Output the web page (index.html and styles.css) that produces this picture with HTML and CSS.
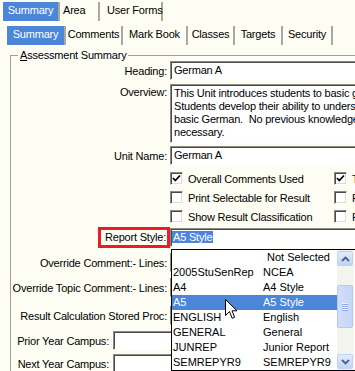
FILE: index.html
```html
<!DOCTYPE html>
<html>
<head>
<meta charset="utf-8">
<title>Assessment Summary</title>
<link rel="stylesheet" href="styles.css">
</head>
<body>
<div class="tabs top">
  <div class="tab sel t-sum">Summary</div>
  <div class="tab t-area">Area</div>
  <div class="tab t-uf">User Forms</div>
</div>
<div class="tabs sub">
  <div class="tab sel s-sum">Summary</div>
  <div class="tab s-com">Comments</div>
  <div class="tab s-mb">Mark Book</div>
  <div class="tab s-cl">Classes</div>
  <div class="tab s-tg">Targets</div>
  <div class="tab s-sec">Security</div>
</div>
<fieldset class="group">
  <legend><u>A</u>ssessment Summary</legend>
  <div class="row r-heading">
    <div class="lbl">Heading:</div>
    <div class="field wide">German A</div>
  </div>
  <div class="row r-overview">
    <div class="lbl top">Overview:</div>
    <div class="field wide area">This Unit introduces students to basic german.<br>Students develop their ability to understand and use<br>basic German.&nbsp; No previous knowledge of German is<br>necessary.</div>
  </div>
  <div class="row r-unit">
    <div class="lbl">Unit Name:</div>
    <div class="field wide">German A</div>
  </div>
  <div class="checks c-first">
    <div class="chk"><span class="cb on"><svg viewBox="0 0 11 11" width="11" height="11"><polyline points="2,5 4.3,7.5 9,2.5" fill="none" stroke="#000" stroke-width="1.8"/></svg></span><span class="ct">Overall Comments Used</span></div>
    <div class="chk"><span class="cb on"><svg viewBox="0 0 11 11" width="11" height="11"><polyline points="2,5 4.3,7.5 9,2.5" fill="none" stroke="#000" stroke-width="1.8"/></svg></span><span class="ct">Topic Comments Used</span></div>
  </div>
  <div class="checks">
    <div class="chk"><span class="cb"></span><span class="ct">Print Selectable for Result</span></div>
    <div class="chk"><span class="cb"></span><span class="ct">Print Result Description</span></div>
  </div>
  <div class="checks">
    <div class="chk"><span class="cb"></span><span class="ct">Show Result Classification</span></div>
    <div class="chk"><span class="cb"></span><span class="ct">Print Classification</span></div>
  </div>
  <div class="row r-report">
    <div class="lbl boxed"><span class="redbox">Report Style:</span></div>
    <div class="field wide combo"><span class="selected">A5 Style</span></div>
  </div>
  <div class="row r-oc">
    <div class="lbl">Override Comment:- Lines:</div>
    <div class="field small"></div>
  </div>
  <div class="row r-ot">
    <div class="lbl">Override Topic Comment:- Lines:</div>
    <div class="field small"></div>
  </div>
  <div class="row r-rc">
    <div class="lbl">Result Calculation Stored Proc:</div>
    <div class="field wide"></div>
  </div>
  <div class="row r-py">
    <div class="lbl short">Prior Year Campus:</div>
    <div class="field campus"></div>
  </div>
  <div class="row r-ny">
    <div class="lbl short">Next Year Campus:</div>
    <div class="field campus"></div>
  </div>
</fieldset>

<div class="dropdown">
  <div class="list">
    <div class="opt"><span></span><span class="ns">Not Selected</span></div>
    <div class="opt"><span>2005StuSenRep</span><span>NCEA</span></div>
    <div class="opt"><span>A4</span><span>A4 Style</span></div>
    <div class="opt sel"><span>A5</span><span>A5 Style</span></div>
    <div class="opt"><span>ENGLISH</span><span>English</span></div>
    <div class="opt"><span>GENERAL</span><span>General</span></div>
    <div class="opt"><span>JUNREP</span><span>Junior Report</span></div>
    <div class="opt"><span>SEMREPYR9</span><span>SEMREPYR9</span></div>
  </div>
  <div class="scroll">
    <div class="sbtn"><svg viewBox="0 0 9 6" width="9" height="6"><polyline points="1,5 4.5,1.5 8,5" fill="none" stroke="#4d6185" stroke-width="1.8"/></svg></div>
    <div class="thumb"><span></span><span></span><span></span><span></span></div>
    <div class="sbtn"><svg viewBox="0 0 9 6" width="9" height="6"><polyline points="1,1 4.5,4.5 8,1" fill="none" stroke="#4d6185" stroke-width="1.8"/></svg></div>
  </div>
</div>

<svg class="cursor" viewBox="0 0 13 21" width="13" height="21"><path d="M0.5 0.5 L0.5 16.5 L4.5 12.6 L7.2 19.3 L9.6 18.3 L7 11.8 L12 11.8 Z" fill="#fff" stroke="#000" stroke-width="1" stroke-linejoin="miter"/></svg>
</body>
</html>
```
FILE: styles.css
```css
html { overflow: hidden; }
body {
  margin: 0;
  width: 355px;
  height: 371px;
  overflow: hidden;
  position: relative;
  background: #fdfdf3;
  color: #000;
  font-family: "Liberation Sans", Arial, sans-serif;
  font-size: 11px;
  letter-spacing: -0.2px;
}

/* tabs */
.tabs { display: flex; height: 24px; box-sizing: border-box; padding-top: 2px; }
.tabs.top { padding-left: 3px; }
.tabs.sub { padding-left: 7px; }
.tab {
  height: 19px;
  line-height: 17px;
  box-sizing: border-box;
  border-right: 2px solid #a9a9a1;
  white-space: nowrap;
  text-align: center;
  flex: none;
}
.tab.sel { background: #4b86d9; color: #fff; }
.t-sum { width: 57px; }
.t-area { width: 40px; text-align: left; padding-left: 3px; }
.t-uf { width: 63px; text-align: left; padding-left: 7px; }
.s-sum { width: 59px; }
.s-com { width: 57px; }
.s-mb { width: 65px; }
.s-cl { width: 47px; }
.s-tg { width: 48px; }
.s-sec { width: 50px; }

/* group box */
.group {
  margin: 1px 0 0 10px;
  padding: 0;
  border: 0;
  border-top: 1px solid #a0a09a;
  border-left: 1px solid #a0a09a;
  box-shadow: inset 1px 1px 0 #fff;
  min-width: 0;
  height: 330px;
}
.group legend {
  padding: 0 2px;
  margin-left: 7px;
  line-height: 12px;
}

.row { display: flex; align-items: center; height: 19px; }
.lbl { width: 156px; flex: none; text-align: right; white-space: nowrap; }
.lbl.top { align-self: flex-start; padding-top: 2px; }
.lbl.short { width: 98px; }
.lbl.boxed { width: 159px; display: flex; justify-content: flex-end; }
.redbox {
  display: block;
  height: 21px;
  box-sizing: border-box;
  border: 3px solid #ec1c24;
  padding: 0 1px 0 4px;
  line-height: 15px;
}

.field {
  margin-left: 3px;
  height: 19px;
  box-sizing: border-box;
  background: #fff;
  border: 1px solid;
  border-color: #8a8a86 #fff #fff #8a8a86;
  box-shadow: inset 1px 1px 0 #4a4a4a;
  padding: 0 2px 0 3px;
  line-height: 17px;
  white-space: nowrap;
  overflow: hidden;
  flex: none;
}
.field.wide { width: 220px; }
.field.small { width: 30px; }
.field.campus { margin-left: 4px; width: 260px; }
.field.area { height: 59px; line-height: 13px; padding-top: 2px; }
.field.combo { margin-left: 0; padding-left: 1px; }
.selected { background: #4b86d9; color: #fff; padding: 0 1px; }

.r-overview { height: 59px; margin-top: 4px; align-items: flex-start; }
.r-unit { margin-top: 3px; }
.r-report { margin-top: 2px; }
.r-oc { margin-top: 6px; }
.r-ot { margin-top: 6px; }
.r-rc { margin-top: 9px; }
.r-py { margin-top: 6px; }
.r-ny { margin-top: 4px; }

/* checkboxes */
.checks { display: flex; height: 19px; align-items: center; padding-left: 159px; }
.c-first { margin-top: 4px; }
.chk { display: flex; align-items: center; width: 164px; flex: none; white-space: nowrap; }
.cb {
  width: 13px;
  height: 13px;
  box-sizing: border-box;
  background: #fff;
  border: 1px solid;
  border-color: #8a8a86 #fff #fff #8a8a86;
  box-shadow: inset 1px 1px 0 #4a4a4a, inset -1px -1px 0 #dcdcd4;
  display: flex;
  align-items: center;
  justify-content: center;
  flex: none;
}
.cb svg { display: block; }
.ct { margin-left: 5px; }

/* dropdown list (overlay) */
.dropdown {
  position: absolute;
  left: 171px;
  top: 249px;
  width: 186px;
  height: 122px;
  box-sizing: border-box;
  border: 1px solid #000;
  background: #fff;
  display: flex;
  letter-spacing: 0;
}
.list { flex: 1; }
.opt {
  display: grid;
  grid-template-columns: 90px 1fr;
  height: 15px;
  line-height: 15px;
  padding-left: 1px;
  white-space: nowrap;
}
.opt.sel { background: #4b86d9; color: #fff; }
.ns { padding-left: 4px; }
.scroll {
  width: 17px;
  flex: none;
  background: #f4f4ee;
  display: flex;
  flex-direction: column;
  padding: 1px 1px 1px 0;
  box-sizing: border-box;
  margin-right: 2px;
}
.sbtn {
  height: 15px;
  box-sizing: border-box;
  border: 1px solid #c1d1f6;
  border-radius: 2px;
  background: linear-gradient(#e3ebfd, #c2d3f8);
  display: flex;
  align-items: center;
  justify-content: center;
  flex: none;
}
.sbtn svg { display: block; }
.thumb {
  margin-top: 19px;
  height: 43px;
  box-sizing: border-box;
  border: 1px solid #b6c9f3;
  border-radius: 2px;
  background: linear-gradient(90deg, #d2def9, #c6d6fa);
  display: flex;
  flex-direction: column;
  align-items: center;
  justify-content: center;
  gap: 1px;
  flex: none;
  margin-bottom: auto;
}
.thumb span { display: block; width: 6px; height: 1px; background: #eef3fe; box-shadow: 0 1px 0 #8faae0; }

.cursor { position: absolute; left: 225px; top: 299px; }
```
